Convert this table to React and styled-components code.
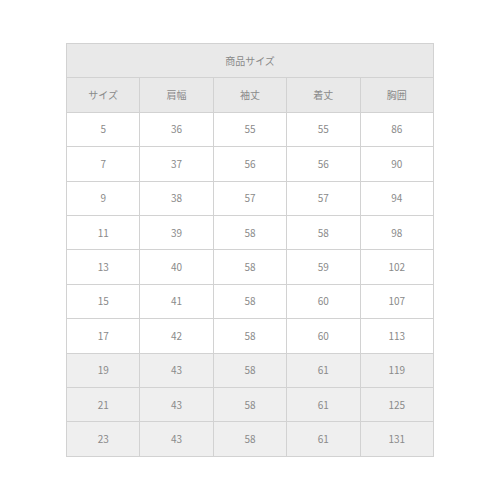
import React from 'react';
import styled, { createGlobalStyle } from 'styled-components';

const GlobalStyle = createGlobalStyle`
  html, body {
    margin: 0;
    padding: 0;
    background: #fff;
  }
  body {
    font-family: "Noto Sans CJK JP", "Noto Sans", sans-serif;
  }
`;

const Page = styled.div`
  width: 500px;
  padding-top: 43px;
  display: flex;
  justify-content: center;
  align-items: flex-start;
`;

const Table = styled.table`
  width: 368px;
  border-collapse: collapse;
  table-layout: fixed;
  border: 1px solid #d2d2d2;
`;

const Row = styled.tr`
  height: 34.4px;
`;

const Cell = styled.td`
  padding: 0;
  border: 1px solid #d2d2d2;
  text-align: center;
  vertical-align: middle;
  font-size: 10px;
  line-height: 14px;
  color: #8a8a8a;
  background: ${(p) => (p.$shade ? '#efefef' : '#fff')};
`;

const HeadCell = styled(Cell).attrs({ as: 'th' })`
  font-weight: normal;
  background: #e9e9e9;
`;

const columns = ['サイズ', '肩幅', '袖丈', '着丈', '胸囲'];

const rows = [
  [5, 36, 55, 55, 86],
  [7, 37, 56, 56, 90],
  [9, 38, 57, 57, 94],
  [11, 39, 58, 58, 98],
  [13, 40, 58, 59, 102],
  [15, 41, 58, 60, 107],
  [17, 42, 58, 60, 113],
  [19, 43, 58, 61, 119],
  [21, 43, 58, 61, 125],
  [23, 43, 58, 61, 131],
];

const App = () => (
  <>
    <GlobalStyle />
    <Page>
      <Table>
        <thead>
          <Row>
            <HeadCell colSpan={5}>商品サイズ</HeadCell>
          </Row>
          <Row>
            {columns.map((c) => (
              <HeadCell key={c}>{c}</HeadCell>
            ))}
          </Row>
        </thead>
        <tbody>
          {rows.map((r, i) => (
            <Row key={r[0]}>
              {r.map((v, j) => (
                <Cell key={j} $shade={i >= 7}>
                  {v}
                </Cell>
              ))}
            </Row>
          ))}
        </tbody>
      </Table>
    </Page>
  </>
);

export default App;
